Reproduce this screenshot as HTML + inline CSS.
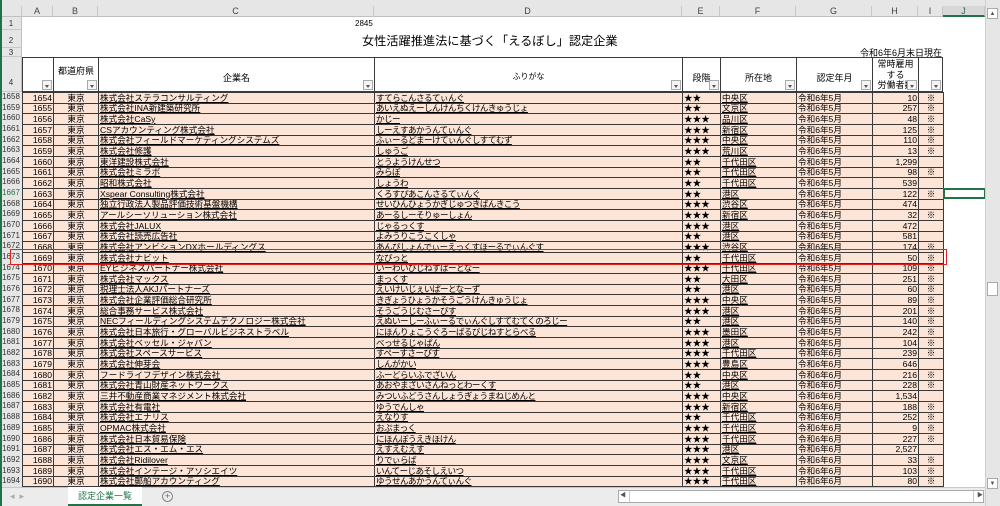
<!DOCTYPE html>
<html><head><meta charset="utf-8">
<style>
*{margin:0;padding:0;box-sizing:border-box}
body{width:1000px;height:506px;overflow:hidden;background:#fff;font-family:"Liberation Sans","Noto Sans CJK JP",sans-serif;position:relative;font-size:8.6px;color:#000}
.abs{position:absolute}
#colhdr{left:0;top:0;width:985px;height:17px;background:#e6e6e6;border-bottom:1px solid #bfbfbf}
.ch{position:absolute;top:6px;height:11px;font-size:9px;color:#444;text-align:center;border-right:1px solid #c8c8c8;line-height:10px}
#rowhdr{left:0;top:17px;width:22px;height:470px;background:#e6e6e6;border-right:1px solid #bfbfbf}
.rh{position:absolute;left:0;width:22px;font-size:8px;color:#333;text-align:center;border-bottom:1px solid #c8c8c8}
table{position:absolute;left:22px;top:92px;border-collapse:collapse;table-layout:fixed}
td{height:10.67px;border:1px solid #3a3a3a;background:#fce4d6;white-space:nowrap;overflow:hidden;line-height:9px;padding:0 1px;font-size:8.6px;vertical-align:bottom}
td.r{text-align:right}
td.c{text-align:center}
td.u span{text-decoration:underline}
td.k{letter-spacing:-0.6px}
.hc{position:absolute;top:57px;height:35px;border:1px solid #3a3a3a;background:#fff;font-size:9px;text-align:center}
.fb{position:absolute;right:1px;bottom:1px;width:10px;height:10px;border:1px solid #aaa;background:#f4f4f4}
.fb:after{content:"";position:absolute;left:2px;top:4px;border-left:2.5px solid transparent;border-right:2.5px solid transparent;border-top:3px solid #555}
</style></head><body>
<div class="abs" style="left:0;top:0;width:2px;height:506px;background:#217346;z-index:5"></div>
<div id="colhdr" class="abs">
<div class="ch" style="left:0;width:22px"></div>
<div class="ch" style="left:22px;width:31px">A</div>
<div class="ch" style="left:53px;width:45px">B</div>
<div class="ch" style="left:98px;width:276px">C</div>
<div class="ch" style="left:374px;width:308px">D</div>
<div class="ch" style="left:682px;width:38px">E</div>
<div class="ch" style="left:720px;width:76px">F</div>
<div class="ch" style="left:796px;width:76px">G</div>
<div class="ch" style="left:872px;width:46px">H</div>
<div class="ch" style="left:918px;width:25px">I</div>
<div class="ch" style="left:943px;width:42px;color:#217346;border-bottom:2px solid #217346;background:#d8d8d8">J</div>
</div>
<div id="rowhdr" class="abs">
<div class="rh" style="top:0;height:13px;line-height:13px">1</div>
<div class="rh" style="top:13px;height:18px;line-height:22px">2</div>
<div class="rh" style="top:31px;height:9px;line-height:9px">3</div>
<div class="rh" style="top:40px;height:35px;line-height:52px">4</div>
</div>
<div class="abs" style="left:0;top:92px;width:22px">
<div style="font-size:8px;color:#333;line-height:10.67px;text-align:center;background:#e6e6e6">1658<br>1659<br>1660<br>1661<br>1662<br>1663<br>1664<br>1665<br>1666<br><span style="color:#217346">1667</span><br>1668<br>1669<br>1670<br>1671<br>1672<br>1673<br>1674<br>1675<br>1676<br>1677<br>1678<br>1679<br>1680<br>1681<br>1682<br>1683<br>1684<br>1685<br>1686<br>1687<br>1688<br>1689<br>1690<br>1691<br>1692<br>1693<br>1694</div>
</div>
<div class="abs" style="left:355px;top:19px;font-size:8px">2845</div>
<div class="abs" style="left:362px;top:31px;font-size:12.2px">女性活躍推進法に基づく「えるぼし」認定企業</div>
<div class="abs" style="left:800px;top:46px;width:142px;text-align:right;font-size:9px">令和6年6月末日現在</div>

<div class="hc" style="left:22px;width:32px"><div class="fb"></div></div>
<div class="hc" style="left:53px;width:46px"><div style="margin-top:6px">都道府県</div><div class="fb"></div></div>
<div class="hc" style="left:98px;width:277px"><div style="margin-top:13px">企業名</div><div class="fb"></div></div>
<div class="hc" style="left:374px;width:309px"><div style="margin-top:13px;font-size:8px">ふりがな</div><div class="fb"></div></div>
<div class="hc" style="left:682px;width:39px"><div style="margin-top:13px">段階</div><div class="fb"></div></div>
<div class="hc" style="left:720px;width:77px"><div style="margin-top:13px">所在地</div><div class="fb"></div></div>
<div class="hc" style="left:796px;width:77px"><div style="margin-top:13px">認定年月</div><div class="fb"></div></div>
<div class="hc" style="left:872px;width:47px;line-height:10.5px;padding-top:1px">常時雇用<br>する<br>労働者数<div class="fb"></div></div>
<div class="hc" style="left:918px;width:25px"><div class="fb"></div></div>

<table>
<colgroup><col style="width:31px"><col style="width:45px"><col style="width:276px"><col style="width:308px"><col style="width:38px"><col style="width:76px"><col style="width:76px"><col style="width:46px"><col style="width:25px"></colgroup>
<tr><td class="r">1654</td><td class="c">東京</td><td class="u"><span>株式会社ステラコンサルティング</span></td><td class="u k"><span>すてらこんさるてぃんぐ</span></td><td>★★</td><td class="u"><span>中央区</span></td><td>令和6年5月</td><td class="r">10</td><td class="c">※</td></tr>
<tr><td class="r">1655</td><td class="c">東京</td><td class="u"><span>株式会社INA新建築研究所</span></td><td class="u k"><span>あいえぬえーしんけんちくけんきゅうじょ</span></td><td>★★</td><td class="u"><span>文京区</span></td><td>令和6年5月</td><td class="r">257</td><td class="c">※</td></tr>
<tr><td class="r">1656</td><td class="c">東京</td><td class="u"><span>株式会社CaSy</span></td><td class="u k"><span>かじー</span></td><td>★★★</td><td class="u"><span>品川区</span></td><td>令和6年5月</td><td class="r">48</td><td class="c">※</td></tr>
<tr><td class="r">1657</td><td class="c">東京</td><td class="u"><span>CSアカウンティング株式会社</span></td><td class="u k"><span>しーえすあかうんてぃんぐ</span></td><td>★★★</td><td class="u"><span>新宿区</span></td><td>令和6年5月</td><td class="r">125</td><td class="c">※</td></tr>
<tr><td class="r">1658</td><td class="c">東京</td><td class="u"><span>株式会社フィールドマーケティングシステムズ</span></td><td class="u k"><span>ふぃーるどまーけてぃんぐしすてむず</span></td><td>★★★</td><td class="u"><span>中央区</span></td><td>令和6年5月</td><td class="r">110</td><td class="c">※</td></tr>
<tr><td class="r">1659</td><td class="c">東京</td><td class="u"><span>株式会社修護</span></td><td class="u k"><span>しゅうご</span></td><td>★★★</td><td class="u"><span>荒川区</span></td><td>令和6年5月</td><td class="r">13</td><td class="c">※</td></tr>
<tr><td class="r">1660</td><td class="c">東京</td><td class="u"><span>東洋建設株式会社</span></td><td class="u k"><span>とうようけんせつ</span></td><td>★★</td><td class="u"><span>千代田区</span></td><td>令和6年5月</td><td class="r">1,299</td><td class="c"></td></tr>
<tr><td class="r">1661</td><td class="c">東京</td><td class="u"><span>株式会社ミラボ</span></td><td class="u k"><span>みらぼ</span></td><td>★★</td><td class="u"><span>千代田区</span></td><td>令和6年5月</td><td class="r">98</td><td class="c">※</td></tr>
<tr><td class="r">1662</td><td class="c">東京</td><td class="u"><span>昭和株式会社</span></td><td class="u k"><span>しょうわ</span></td><td>★★</td><td class="u"><span>千代田区</span></td><td>令和6年5月</td><td class="r">539</td><td class="c"></td></tr>
<tr><td class="r">1663</td><td class="c">東京</td><td class="u"><span>Xspear Consulting株式会社</span></td><td class="u k"><span>くろすぴあこんさるてぃんぐ</span></td><td>★★</td><td class="u"><span>港区</span></td><td>令和6年5月</td><td class="r">122</td><td class="c">※</td></tr>
<tr><td class="r">1664</td><td class="c">東京</td><td class="u"><span>独立行政法人製品評価技術基盤機構</span></td><td class="u k"><span>せいひんひょうかぎじゅつきばんきこう</span></td><td>★★★</td><td class="u"><span>渋谷区</span></td><td>令和6年5月</td><td class="r">474</td><td class="c"></td></tr>
<tr><td class="r">1665</td><td class="c">東京</td><td class="u"><span>アールシーソリューション株式会社</span></td><td class="u k"><span>あーるしーそりゅーしょん</span></td><td>★★★</td><td class="u"><span>新宿区</span></td><td>令和6年5月</td><td class="r">32</td><td class="c">※</td></tr>
<tr><td class="r">1666</td><td class="c">東京</td><td class="u"><span>株式会社JALUX</span></td><td class="u k"><span>じゃるっくす</span></td><td>★★★</td><td class="u"><span>港区</span></td><td>令和6年5月</td><td class="r">472</td><td class="c"></td></tr>
<tr><td class="r">1667</td><td class="c">東京</td><td class="u"><span>株式会社読売広告社</span></td><td class="u k"><span>よみうりこうこくしゃ</span></td><td>★★</td><td class="u"><span>港区</span></td><td>令和6年5月</td><td class="r">581</td><td class="c"></td></tr>
<tr><td class="r">1668</td><td class="c">東京</td><td class="u"><span>株式会社アンビションDXホールディングス</span></td><td class="u k"><span>あんびしょんでぃーえっくすほーるでぃんぐす</span></td><td>★★★</td><td class="u"><span>渋谷区</span></td><td>令和6年5月</td><td class="r">174</td><td class="c">※</td></tr>
<tr><td class="r">1669</td><td class="c">東京</td><td class="u"><span>株式会社ナビット</span></td><td class="u k"><span>なびっと</span></td><td>★★</td><td class="u"><span>千代田区</span></td><td>令和6年5月</td><td class="r">50</td><td class="c">※</td></tr>
<tr><td class="r">1670</td><td class="c">東京</td><td class="u"><span>EYビジネスパートナー株式会社</span></td><td class="u k"><span>いーわいびじねすぱーとなー</span></td><td>★★★</td><td class="u"><span>千代田区</span></td><td>令和6年5月</td><td class="r">109</td><td class="c">※</td></tr>
<tr><td class="r">1671</td><td class="c">東京</td><td class="u"><span>株式会社マックス</span></td><td class="u k"><span>まっくす</span></td><td>★★</td><td class="u"><span>大田区</span></td><td>令和6年5月</td><td class="r">251</td><td class="c">※</td></tr>
<tr><td class="r">1672</td><td class="c">東京</td><td class="u"><span>税理士法人AKJパートナーズ</span></td><td class="u k"><span>えいけいじぇいぱーとなーず</span></td><td>★★</td><td class="u"><span>港区</span></td><td>令和6年5月</td><td class="r">60</td><td class="c">※</td></tr>
<tr><td class="r">1673</td><td class="c">東京</td><td class="u"><span>株式会社企業評価総合研究所</span></td><td class="u k"><span>きぎょうひょうかそうごうけんきゅうじょ</span></td><td>★★★</td><td class="u"><span>中央区</span></td><td>令和6年5月</td><td class="r">89</td><td class="c">※</td></tr>
<tr><td class="r">1674</td><td class="c">東京</td><td class="u"><span>総合事務サービス株式会社</span></td><td class="u k"><span>そうごうじむさーびす</span></td><td>★★★</td><td class="u"><span>港区</span></td><td>令和6年5月</td><td class="r">201</td><td class="c">※</td></tr>
<tr><td class="r">1675</td><td class="c">東京</td><td class="u"><span>NECフィールディングシステムテクノロジー株式会社</span></td><td class="u k"><span>えぬいーしーふぃーるでぃんぐしすてむてくのろじー</span></td><td>★★</td><td class="u"><span>港区</span></td><td>令和6年5月</td><td class="r">140</td><td class="c">※</td></tr>
<tr><td class="r">1676</td><td class="c">東京</td><td class="u"><span>株式会社日本旅行・グローバルビジネストラベル</span></td><td class="u k"><span>にほんりょこうぐろーばるびじねすとらべる</span></td><td>★★★</td><td class="u"><span>墨田区</span></td><td>令和6年5月</td><td class="r">242</td><td class="c">※</td></tr>
<tr><td class="r">1677</td><td class="c">東京</td><td class="u"><span>株式会社ベッセル・ジャパン</span></td><td class="u k"><span>べっせるじゃぱん</span></td><td>★★★</td><td class="u"><span>港区</span></td><td>令和6年5月</td><td class="r">104</td><td class="c">※</td></tr>
<tr><td class="r">1678</td><td class="c">東京</td><td class="u"><span>株式会社スペースサービス</span></td><td class="u k"><span>すぺーすさーびす</span></td><td>★★★</td><td class="u"><span>千代田区</span></td><td>令和6年6月</td><td class="r">239</td><td class="c">※</td></tr>
<tr><td class="r">1679</td><td class="c">東京</td><td class="u"><span>株式会社伸芽会</span></td><td class="u k"><span>しんがかい</span></td><td>★★★</td><td class="u"><span>豊島区</span></td><td>令和6年6月</td><td class="r">646</td><td class="c"></td></tr>
<tr><td class="r">1680</td><td class="c">東京</td><td class="u"><span>フードライフデザイン株式会社</span></td><td class="u k"><span>ふーどらいふでざいん</span></td><td>★★</td><td class="u"><span>中央区</span></td><td>令和6年6月</td><td class="r">216</td><td class="c">※</td></tr>
<tr><td class="r">1681</td><td class="c">東京</td><td class="u"><span>株式会社青山財産ネットワークス</span></td><td class="u k"><span>あおやまざいさんねっとわーくす</span></td><td>★★</td><td class="u"><span>港区</span></td><td>令和6年6月</td><td class="r">228</td><td class="c">※</td></tr>
<tr><td class="r">1682</td><td class="c">東京</td><td class="u"><span>三井不動産商業マネジメント株式会社</span></td><td class="u k"><span>みついふどうさんしょうぎょうまねじめんと</span></td><td>★★★</td><td class="u"><span>中央区</span></td><td>令和6年6月</td><td class="r">1,534</td><td class="c"></td></tr>
<tr><td class="r">1683</td><td class="c">東京</td><td class="u"><span>株式会社有電社</span></td><td class="u k"><span>ゆうでんしゃ</span></td><td>★★★</td><td class="u"><span>新宿区</span></td><td>令和6年6月</td><td class="r">188</td><td class="c">※</td></tr>
<tr><td class="r">1684</td><td class="c">東京</td><td class="u"><span>株式会社エナリス</span></td><td class="u k"><span>えなりす</span></td><td>★★</td><td class="u"><span>千代田区</span></td><td>令和6年6月</td><td class="r">252</td><td class="c">※</td></tr>
<tr><td class="r">1685</td><td class="c">東京</td><td class="u"><span>OPMAC株式会社</span></td><td class="u k"><span>おぷまっく</span></td><td>★★★</td><td class="u"><span>千代田区</span></td><td>令和6年6月</td><td class="r">9</td><td class="c">※</td></tr>
<tr><td class="r">1686</td><td class="c">東京</td><td class="u"><span>株式会社日本貿易保険</span></td><td class="u k"><span>にほんぼうえきほけん</span></td><td>★★★</td><td class="u"><span>千代田区</span></td><td>令和6年6月</td><td class="r">227</td><td class="c">※</td></tr>
<tr><td class="r">1687</td><td class="c">東京</td><td class="u"><span>株式会社エス・エム・エス</span></td><td class="u k"><span>えすえむえす</span></td><td>★★★</td><td class="u"><span>港区</span></td><td>令和6年6月</td><td class="r">2,527</td><td class="c"></td></tr>
<tr><td class="r">1688</td><td class="c">東京</td><td class="u"><span>株式会社Ridilover</span></td><td class="u k"><span>りでぃらば</span></td><td>★★★</td><td class="u"><span>文京区</span></td><td>令和6年6月</td><td class="r">33</td><td class="c">※</td></tr>
<tr><td class="r">1689</td><td class="c">東京</td><td class="u"><span>株式会社インテージ・アソシエイツ</span></td><td class="u k"><span>いんてーじあそしえいつ</span></td><td>★★★</td><td class="u"><span>千代田区</span></td><td>令和6年6月</td><td class="r">103</td><td class="c">※</td></tr>
<tr><td class="r">1690</td><td class="c">東京</td><td class="u"><span>株式会社郵船アカウンティング</span></td><td class="u k"><span>ゆうせんあかうんてぃんぐ</span></td><td>★★★</td><td class="u"><span>千代田区</span></td><td>令和6年6月</td><td class="r">80</td><td class="c">※</td></tr>
<tr><td class="r">1691</td><td class="c">東京</td><td class="u"><span>株式会社</span></td><td class="u k"><span></span></td><td>★★</td><td class="u"><span>新宿区</span></td><td>令和6年6月</td><td class="r"></td><td class="c"></td></tr>
</table>

<div class="abs" style="left:943px;top:188px;width:43px;height:11px;border:2px solid #217346"></div>
<div class="abs" style="left:10px;top:249px;width:937px;height:16px;border:1.5px solid #e02020"></div>

<div class="abs" style="left:985px;top:0;width:15px;height:506px;background:#e6e6e6;border-left:1px solid #d0d0d0"></div>
<div class="abs" style="left:987px;top:8px;width:11px;height:11px;background:#fff;border:1px solid #aaa;font-size:6px;text-align:center;line-height:10px;color:#555">▲</div>
<div class="abs" style="left:987px;top:282px;width:11px;height:14px;background:#fff;border:1px solid #aaa"></div>
<div class="abs" style="left:987px;top:478px;width:11px;height:11px;background:#fff;border:1px solid #aaa;font-size:6px;text-align:center;line-height:10px;color:#555">▼</div>

<div class="abs" style="left:2px;top:487px;width:983px;height:19px;background:#ececec;border-top:1px solid #c8c8c8"></div>
<div class="abs" style="left:10px;top:491px;font-size:9px;color:#aaa">◂ &nbsp;▸</div>
<div class="abs" style="left:68px;top:487px;width:74px;height:19px;background:#fff;border-bottom:2px solid #217346;font-size:9px;color:#217346;text-align:center;line-height:18px">認定企業一覧</div>
<div class="abs" style="left:162px;top:491px;width:11px;height:11px;border:1px solid #888;border-radius:50%;font-size:9px;line-height:9px;text-align:center;color:#666">+</div>
<div class="abs" style="left:618px;top:490px;width:366px;height:13px;background:#fff;border:1px solid #aaa"></div>
<div class="abs" style="left:620px;top:491px;width:10px;height:11px;border-right:1px solid #ccc;font-size:6px;line-height:11px;color:#555">◀</div>
<div class="abs" style="left:973px;top:491px;width:10px;height:11px;border-left:1px solid #ccc;font-size:6px;line-height:11px;color:#555;text-align:right">▶</div>
</body></html>
